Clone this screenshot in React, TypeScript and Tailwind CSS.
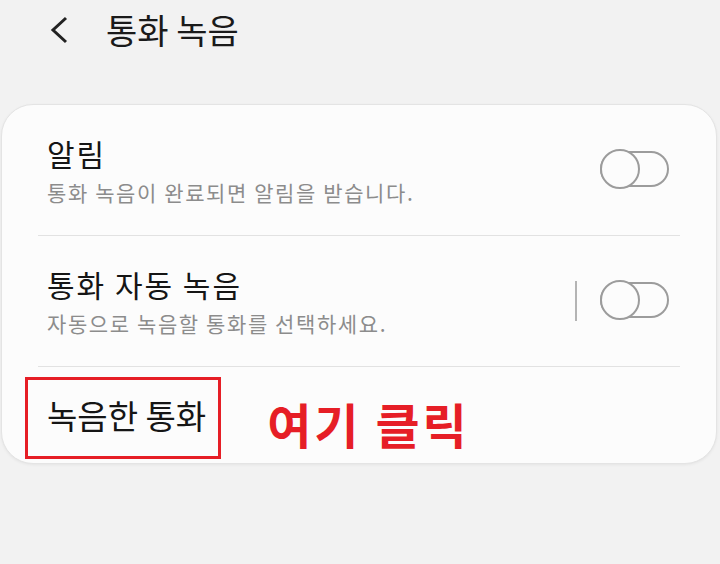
const font = "font-['Noto_Sans_CJK_KR','Noto_Sans',sans-serif]";

function Toggle() {
  return (
    <div className="relative w-[69px] h-[40px] shrink-0 -mt-[2px]">
      <div className="absolute left-0 right-0 top-[2px] h-[36px] rounded-full border-2 border-[#9c9c9c]" />
      <div className="absolute left-0 top-0 w-[40px] h-[40px] rounded-full border-2 border-[#9c9c9c] bg-[#fcfcfc]" />
    </div>
  );
}

function Row({ title, sub, bar }: { title: string; sub: string; bar?: boolean }) {
  return (
    <div className="h-[130px] flex items-center justify-between pl-[45px] pr-[47px]">
      <div className="flex flex-col">
        <p className="text-[30px] leading-[40px] tracking-[2px] text-[#151515]">{title}</p>
        <p className="mt-[4px] text-[21px] leading-[30px] tracking-[1.6px] text-[#8c8c8c]">{sub}</p>
      </div>
      <div className="flex items-center">
        {bar && <div className="w-[2px] h-[40px] bg-[#b4b4b4] mr-[23px]" />}
        <Toggle />
      </div>
    </div>
  );
}

export default function App() {
  return (
    <div className={`w-[720px] h-[564px] bg-[#f2f2f2] overflow-hidden ${font}`}>
      <div className="h-[60px] flex items-center">
        <svg width="20" height="28" viewBox="0 0 20 28" className="ml-[49px]">
          <path d="M17 2 L4 14 L17 26" fill="none" stroke="#222" strokeWidth="3" />
        </svg>
        <h1 className="ml-[37px] text-[34px] leading-[40px] text-[#1a1a1a]">통화 녹음</h1>
      </div>

      <div className="mt-[44px] ml-[1px] w-[716px] rounded-[32px] bg-[#fcfcfc] border border-[#e4e4e4] shadow-[0_1px_3px_rgba(0,0,0,0.06)]">
        <Row title="알림" sub="통화 녹음이 완료되면 알림을 받습니다." />
        <div className="mx-[36px] h-px bg-[#e2e2e2]" />
        <Row title="통화 자동 녹음" sub="자동으로 녹음할 통화를 선택하세요." bar />
        <div className="mx-[36px] h-px bg-[#e2e2e2]" />
        <div className="relative h-[96px] flex items-center pl-[45px]">
          <p className="text-[33px] leading-[44px] text-[#151515]">녹음한 통화</p>
          <p className="ml-[61px] mt-[16px] text-[48px] leading-[52px] font-bold text-[#e61e26] tracking-[3px]">여기 클릭</p>
          <div className="absolute left-[23px] top-[10px] w-[196px] h-[82px] border-[3px] border-[#e61e26]" />
        </div>
      </div>
    </div>
  );
}
